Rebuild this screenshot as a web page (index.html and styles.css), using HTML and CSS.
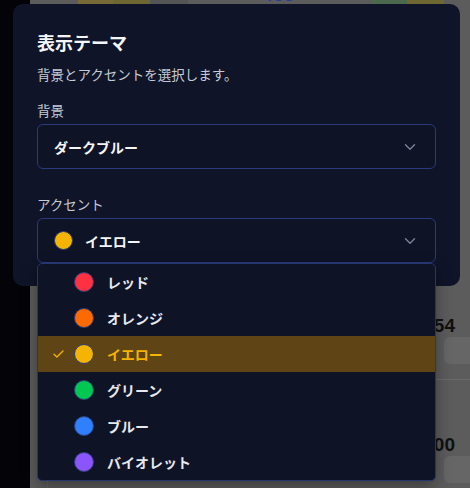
FILE: index.html
```html
<!DOCTYPE html>
<html lang="ja">
<head>
    <meta charset="UTF-8">
    <meta name="viewport" content="width=device-width, initial-scale=1.0">
    <title>表示テーマ</title>
    <link rel="stylesheet" href="styles.css">
</head>
<body>
    <div class="app">
        <div class="rail"></div>
        <div class="page">
            <div class="tags">
                <span class="tag tag-y">ABS</span>
                <span class="tag tag-y2">AT</span>
                <span class="tag tag-g"></span>
                <span class="tag-text">TSU</span>
                <span class="tag tag-f">FS</span>
                <span class="tag tag-y2">AT</span>
            </div>
            <div class="board">
                <div class="stat">
                    <div class="stat-num">154</div>
                    <div class="stat-box"></div>
                </div>
                <div class="stat stat-last">
                    <div class="stat-num">100</div>
                    <div class="stat-box"></div>
                </div>
            </div>
        </div>
    </div>

    <!-- テーマ設定ダイアログ -->
    <div class="dialog">
        <h2 class="dialog-title">表示テーマ</h2>
        <p class="dialog-desc">背景とアクセントを選択します。</p>

        <div class="field">
            <div class="field-label">背景</div>
            <div class="select">
                <span class="select-text">ダークブルー</span>
                <svg class="chevron" width="12" height="8" viewBox="0 0 12 8"><path d="M1.5 1.8 6 6.2 10.5 1.8" fill="none" stroke="currentColor" stroke-width="1.4" stroke-linecap="round" stroke-linejoin="round"/></svg>
            </div>
        </div>

        <div class="field field-accent">
            <div class="field-label">アクセント</div>
            <div class="select select-open">
                <span class="dot dot-yellow"></span>
                <span class="select-text">イエロー</span>
                <svg class="chevron" width="12" height="8" viewBox="0 0 12 8"><path d="M1.5 1.8 6 6.2 10.5 1.8" fill="none" stroke="currentColor" stroke-width="1.4" stroke-linecap="round" stroke-linejoin="round"/></svg>

                <ul class="menu">
                    <li class="menu-item"><span class="check"></span><span class="dot dot-red"></span>レッド</li>
                    <li class="menu-item"><span class="check"></span><span class="dot dot-orange"></span>オレンジ</li>
                    <li class="menu-item active">
                        <span class="check"><svg width="11" height="8" viewBox="0 0 11 8"><path d="M1 4.2 3.9 7 10 1" fill="none" stroke="currentColor" stroke-width="1.3" stroke-linecap="round" stroke-linejoin="round"/></svg></span>
                        <span class="dot dot-yellow"></span>イエロー
                    </li>
                    <li class="menu-item"><span class="check"></span><span class="dot dot-green"></span>グリーン</li>
                    <li class="menu-item"><span class="check"></span><span class="dot dot-blue"></span>ブルー</li>
                    <li class="menu-item"><span class="check"></span><span class="dot dot-violet"></span>バイオレット</li>
                </ul>
            </div>
        </div>
    </div>
</body>
</html>
```

FILE: styles.css
```css
* {
    margin: 0;
    padding: 0;
    box-sizing: border-box;
}

body {
    width: 470px;
    height: 488px;
    overflow: hidden;
    background-color: #040408;
    font-family: "Noto Sans CJK JP", "Noto Sans", sans-serif;
}

/* 背後のページ（暗くなった状態） */
.app {
    display: flex;
    height: 488px;
}

.rail {
    width: 30px;
    background-color: #040408;
}

.page {
    flex: 1;
    background-color: #5c5c5c;
    overflow: hidden;
}

.tags {
    display: flex;
    align-items: flex-end;
    height: 20px;
    margin-top: -16px;
    padding-left: 48px;
}

.tag {
    height: 20px;
    line-height: 18px;
    font-size: 15px;
    font-weight: 700;
    text-align: center;
    color: #3a2f10;
}

.tag-y {
    width: 35px;
    background-color: #786a36;
}

.tag-y2 {
    width: 37px;
    background-color: #6f6732;
}

.tag-g {
    width: 38px;
    background-color: #555555;
}

.tag-text {
    margin-left: 77px;
    margin-right: 77px;
    font-size: 15px;
    line-height: 18px;
    font-weight: 700;
    color: #2a3c98;
}

.tag-f {
    width: 36px;
    background-color: #4b6a4d;
    color: #1d3020;
}

.board {
    margin-left: 17px;
    padding-top: 311px;
    border-left: 1px solid #666666;
    height: 100%;
}

.stat {
    padding-bottom: 15px;
    border-bottom: 1px solid #6a6a6a;
}

.stat-last {
    padding-top: 54px;
    border-bottom: none;
}

.stat-num {
    height: 22px;
    line-height: 22px;
    padding-right: 15px;
    text-align: right;
    font-family: "Liberation Sans", sans-serif;
    font-size: 19px;
    font-weight: 700;
    color: #101010;
}

.stat-box {
    width: 80px;
    height: 27px;
    margin-left: 396px;
    border-radius: 6px;
    background-color: #666666;
}

/* ダイアログ */
.dialog {
    position: absolute;
    left: 13px;
    top: 4px;
    width: 447px;
    padding: 24px 24px 23px;
    border-radius: 10px;
    background-color: #0f1428;
    color: #c6cad3;
}

.dialog-title {
    font-size: 18px;
    line-height: 28px;
    font-weight: 700;
    color: #f4f5f7;
}

.dialog-desc {
    margin-top: 8px;
    font-size: 13.5px;
    line-height: 20px;
}

.field {
    margin-top: 16px;
}

.field-accent {
    margin-top: 25px;
}

.field-label {
    font-size: 13.5px;
    line-height: 20px;
    margin-bottom: 4px;
}

.select {
    position: relative;
    display: flex;
    align-items: center;
    height: 45px;
    padding: 0 16px;
    border: 1px solid #2a3b7c;
    border-radius: 6px;
    background-color: #0e1326;
}

.select .dot {
    margin-right: 12px;
}

.select-text {
    flex: 1;
    font-size: 14px;
    font-weight: 700;
    color: #f4f5f7;
}

.chevron {
    color: #7c8296;
    margin-right: 3px;
}

.dot {
    width: 19px;
    height: 19px;
    border-radius: 50%;
    border: 1px solid #2c3c78;
    flex-shrink: 0;
}

.dot-red { background-color: #ff3040; }
.dot-orange { background-color: #ff6a00; }
.dot-yellow { background-color: #f4b400; }
.dot-green { background-color: #00c853; }
.dot-blue { background-color: #2f80ff; }
.dot-violet { background-color: #8b55fb; }

/* 開いているメニュー */
.menu {
    position: absolute;
    left: -1px;
    right: -1px;
    top: calc(100% + 1px);
    list-style: none;
    border: 1px solid #25366f;
    border-radius: 5px;
    background-color: #0e1326;
    overflow: hidden;
    box-shadow: 0 6px 16px rgba(0, 0, 0, 0.35);
}

.menu-item {
    display: flex;
    align-items: center;
    height: 36px;
    padding-left: 15px;
    font-size: 14px;
    font-weight: 700;
    color: #e6e8ee;
}

.menu-item .dot {
    width: 20px;
    height: 20px;
    margin-right: 13px;
}

.check {
    display: flex;
    align-items: center;
    width: 12px;
    margin-right: 9px;
    color: #f4b400;
}

.menu-item.active {
    background-color: #5f4516;
    color: #f4b400;
}
```
